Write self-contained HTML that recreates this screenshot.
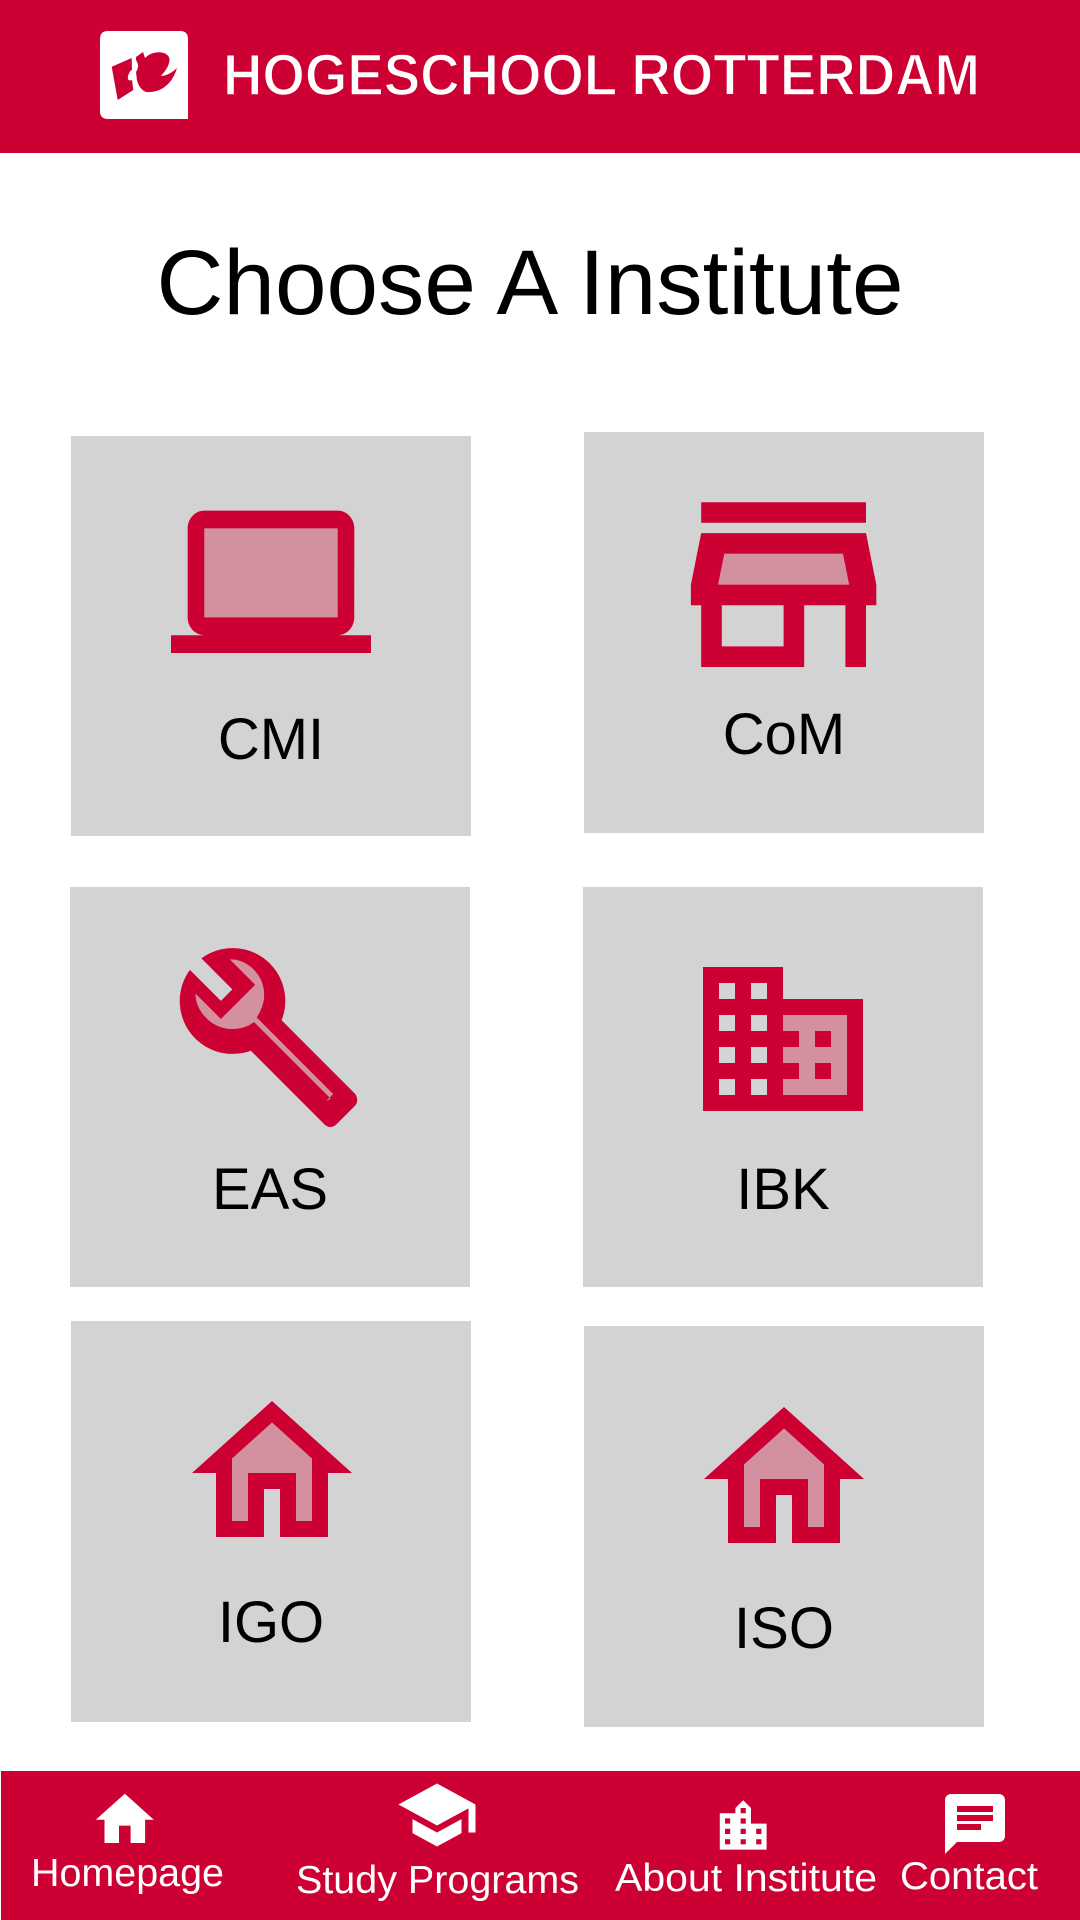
<!DOCTYPE html>
<html><head><meta charset="utf-8"><style>
html,body{margin:0;padding:0;background:#fff;}
svg{display:block;}
text{font-family:"Liberation Sans",sans-serif;}
</style></head><body>
<svg width="1080" height="1920" viewBox="0 0 1080 1920" xmlns="http://www.w3.org/2000/svg">
<rect x="0" y="0" width="1080" height="153" fill="#CC0033"/>
<path d="M108 31H180Q188 31 188 39V119H108Q100 119 100 111V39Q100 31 108 31Z" fill="#fff"/>
<path d="M131.7 58L111.7 66.7L117.7 100L133.3 90L132 80Q127 82 128 76Q130 70 132 70Z" fill="#CC0033"/>
<path d="M136 57L143 52L145 58C155 48 173 52 169 63C167 70 163 73 161 76C168 76 175 70 177 68C172 85 160 93 146 92C141 90 138 85 137 80L136 72Q140 66 136 60Z" fill="#CC0033"/>
<text x="223" y="95" font-size="58" font-weight="bold" fill="#fff" stroke="#CC0033" stroke-width="1.5" textLength="757" lengthAdjust="spacingAndGlyphs">HOGESCHOOL ROTTERDAM</text>

<text x="530" y="314" font-size="92" fill="#000" text-anchor="middle" textLength="747" lengthAdjust="spacingAndGlyphs">Choose A Institute</text>

<rect x="71" y="436" width="400" height="400" fill="#D3D3D3"/>
<rect x="584" y="432" width="400" height="401" fill="#D3D3D3"/>
<rect x="70" y="887" width="400" height="400" fill="#D3D3D3"/>
<rect x="583" y="887" width="400" height="400" fill="#D3D3D3"/>
<rect x="71" y="1321" width="400" height="401" fill="#D3D3D3"/>
<rect x="584" y="1326" width="400" height="401" fill="#D3D3D3"/>

<!-- laptop -->
<g transform="translate(171,475) scale(8.333,8.9)">
<rect x="4" y="6" width="16" height="10" fill="#D3919F"/>
<path fill-rule="evenodd" fill="#CC0033" d="M20 18c1.1 0 1.99-.9 1.99-2L22 6c0-1.1-.9-2-2-2H4c-1.1 0-2 .9-2 2v10c0 1.1.9 2 2 2H0v2h24v-2h-4zM4 6h16v10H4V6z"/>
</g>
<text x="271" y="759" font-size="58" fill="#000" text-anchor="middle">CMI</text>

<!-- store -->
<g transform="translate(660,461) scale(10.3)">
<path fill="#D3919F" d="M5.64 12l.6-3h11.52l.6 3H5.64z"/>
<path fill-rule="evenodd" fill="#CC0033" d="M20 4H4v2h16V4zm1 10v-2l-1-5H4l-1 5v2h1v6h10v-6h4v6h2v-6h1zm-9 4H6v-4h6v4zM5.64 12l.6-3h11.52l.6 3H5.64z"/>
</g>
<text x="784" y="754" font-size="58" fill="#000" text-anchor="middle">CoM</text>

<!-- wrench -->
<g transform="translate(172,940) scale(8.1)">
<path fill="#D3919F" d="M19.59 19.58l-9.46-9.46c-.61.45-1.29.72-2 .82-1.36.2-2.79-.21-3.83-1.25C3.35 8.76 2.89 7.69 2.91 6.63l3.13 3.13 4.24-4.24-3.13-3.13c1.06-.02 2.13.44 2.93 1.25 1.07 1.07 1.48 2.54 1.22 3.91-.13.71-.42 1.39-.86 2.01l9.45 9.45-.87.9z"/>
<path fill-rule="evenodd" fill="#CC0033" d="M22.61 18.99l-9.08-9.08c.93-2.34.45-5.1-1.44-7-2.3-2.3-5.92-2.51-8.46-.64L7.45 6.1 6.04 7.51 2.21 3.69C.35 6.22.56 9.85 2.86 12.14c1.86 1.86 4.57 2.37 6.88 1.54l9.11 9.11c.39.39 1.02.39 1.41 0l2.3-2.3c.4-.38.4-1.01.05-1.5zm-3.02.59l-9.46-9.46c-.61.45-1.29.72-2 .82-1.36.2-2.79-.21-3.83-1.25C3.35 8.76 2.89 7.69 2.91 6.63l3.13 3.13 4.24-4.24-3.13-3.13c1.06-.02 2.13.44 2.93 1.25 1.07 1.07 1.48 2.54 1.22 3.91-.13.71-.42 1.39-.86 2.01l9.45 9.45-.87.9z"/>
</g>
<text x="270" y="1209" font-size="58" fill="#000" text-anchor="middle">EAS</text>

<!-- domain -->
<g transform="translate(687,943) scale(8)">
<rect x="12" y="9" width="8" height="10" fill="#D3919F"/>
<path fill="#CC0033" d="M12 7V3H2v18h20V7H12zM6 19H4v-2h2v2zm0-4H4v-2h2v2zm0-4H4V9h2v2zm0-4H4V5h2v2zm4 12H8v-2h2v2zm0-4H8v-2h2v2zm0-4H8V9h2v2zm0-4H8V5h2v2zm10 12h-8v-2h2v-2h-2v-2h2v-2h-2V9h8v10zm-2-8h-2v2h2v-2zm0 4h-2v2h2v-2z"/>
</g>
<text x="783" y="1209" font-size="58" fill="#000" text-anchor="middle">IBK</text>

<!-- homes -->
<g transform="translate(176,1377) scale(8)">
<path fill="#D3919F" d="M7 10.19V18h2v-6h6v6h2v-7.81l-5-4.5z"/>
<path fill-rule="evenodd" fill="#CC0033" d="M12 5.69l5 4.5V18h-2v-6H9v6H7v-7.81l5-4.5M12 3L2 12h3v8h6v-6h2v6h6v-8h3L12 3z"/>
</g>
<text x="271" y="1642" font-size="58" fill="#000" text-anchor="middle">IGO</text>
<g transform="translate(688,1383) scale(8)">
<path fill="#D3919F" d="M7 10.19V18h2v-6h6v6h2v-7.81l-5-4.5z"/>
<path fill-rule="evenodd" fill="#CC0033" d="M12 5.69l5 4.5V18h-2v-6H9v6H7v-7.81l5-4.5M12 3L2 12h3v8h6v-6h2v6h6v-8h3L12 3z"/>
</g>
<text x="784" y="1648" font-size="58" fill="#000" text-anchor="middle">ISO</text>

<!-- bottom nav -->
<rect x="1" y="1771" width="1079" height="149" fill="#CC0033"/>
<g transform="translate(90,1785) scale(2.9)"><path fill="#fff" d="M10 20v-6h4v6h5v-8h3L12 3 2 12h3v8z"/></g>
<g transform="translate(395,1773) scale(3.5)"><path fill="#fff" d="M5 13.18v4L12 21l7-3.82v-4L12 17l-7-3.82zM12 3L1 9l11 6 9-4.91V17h2V9L12 3z"/></g>
<g transform="translate(712,1795) scale(2.6)"><path fill="#fff" d="M15 11V5l-3-3-3 3v2H3v14h18V11h-6zm-8 8H5v-2h2v2zm0-4H5v-2h2v2zm0-4H5V9h2v2zm6 8h-2v-2h2v2zm0-4h-2v-2h2v2zm0-4h-2V9h2v2zm0-4h-2V5h2v2zm6 12h-2v-2h2v2zm0-4h-2v-2h2v2z"/></g>
<g transform="translate(939,1788) scale(3)"><path fill="#fff" d="M20 2H4c-1.1 0-1.99.9-1.99 2L2 22l4-4h14c1.1 0 2-.9 2-2V4c0-1.1-.9-2-2-2zM6 9h12v2H6V9zm8 5H6v-2h8v2zm4-6H6V6h12v2z"/></g>
<text x="31" y="1886" font-size="39" fill="#fff" textLength="193" lengthAdjust="spacingAndGlyphs">Homepage</text>
<text x="296" y="1893" font-size="39" fill="#fff" textLength="283" lengthAdjust="spacingAndGlyphs">Study Programs</text>
<text x="615" y="1891" font-size="39" fill="#fff" textLength="262" lengthAdjust="spacingAndGlyphs">About Institute</text>
<text x="900" y="1889" font-size="39" fill="#fff" textLength="138" lengthAdjust="spacingAndGlyphs">Contact</text>
</svg>
</body></html>
